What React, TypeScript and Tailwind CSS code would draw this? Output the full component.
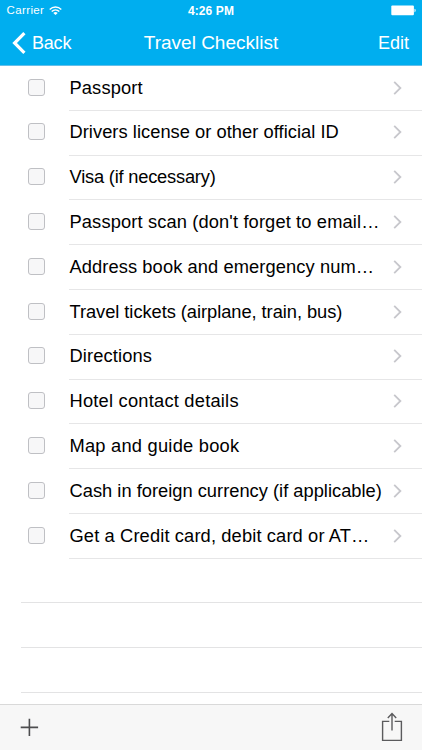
import { useState } from "react";
import clsx from "clsx";

type Item = {
  label: string;
  tracking: string;
};

const ITEMS: Item[] = [
  { label: "Passport", tracking: "tracking-[0.13px]" },
  { label: "Drivers license or other official ID", tracking: "tracking-[0.04px]" },
  { label: "Visa (if necessary)", tracking: "tracking-[-0.21px]" },
  { label: "Passport scan (don't forget to email…", tracking: "tracking-[0.13px]" },
  { label: "Address book and emergency num…", tracking: "tracking-[0.09px]" },
  { label: "Travel tickets (airplane, train, bus)", tracking: "tracking-[-0.05px]" },
  { label: "Directions", tracking: "tracking-[0.12px]" },
  { label: "Hotel contact details", tracking: "tracking-[0.22px]" },
  { label: "Map and guide book", tracking: "tracking-[0.23px]" },
  { label: "Cash in foreign currency (if applicable)", tracking: "tracking-[0.01px]" },
  { label: "Get a Credit card, debit card or AT…", tracking: "tracking-[0.13px]" },
];

function WifiIcon() {
  return (
    <svg width="13" height="10" viewBox="0 0 13 10" fill="none" stroke="white" strokeWidth="1.4">
      <path d="M0.7 3.5C4 0.2 9 0.2 12.3 3.5" />
      <path d="M2.7 5.5C4.9 3.4 8.1 3.4 10.3 5.5" />
      <path d="M6.5 9L4.3 6.9C5.6 5.8 7.4 5.8 8.7 6.9Z" fill="white" stroke="none" />
    </svg>
  );
}

function BatteryIcon() {
  return (
    <svg width="26" height="11" viewBox="0 0 26 11" fill="white">
      <rect x="0.3" y="0.5" width="22.6" height="9.8" rx="1" />
      <path d="M23.5 3.8C25 4 25 7 23.5 7.2Z" />
    </svg>
  );
}

function StatusBar() {
  return (
    <div className="grid h-[21px] grid-cols-3 items-center text-[11.5px] leading-none">
      <div className="flex items-center gap-[5px] pl-[6.5px] pt-[1px]">
        <span className="tracking-[0.38px]">Carrier</span>
        <WifiIcon />
      </div>
      <span className="pt-[1px] text-center text-[12px] font-bold tracking-[0.1px]">4:26 PM</span>
      <div className="flex justify-end pr-[5px]">
        <BatteryIcon />
      </div>
    </div>
  );
}

function ChecklistRow({ item }: { item: Item }) {
  const [checked, setChecked] = useState(false);

  return (
    <li className="flex h-[44.8px] pl-[28px]">
      <button
        type="button"
        role="checkbox"
        aria-checked={checked}
        aria-label={item.label}
        onClick={() => setChecked(!checked)}
        className={clsx(
          "mt-[12.6px] h-[17px] w-[17px] shrink-0 rounded-[3px] border border-[#bfc0c4]",
          checked ? "bg-[#00aeef]" : "bg-[#f7f7f8]",
        )}
      />
      <div className="ml-[24px] flex flex-1 justify-between border-b border-[#e6e6e7] pl-[0.5px] pr-[20px]">
        <span className={clsx("whitespace-nowrap pt-[10.6px] text-[18.3px] leading-[22px]", item.tracking)}>
          {item.label}
        </span>
        <svg className="mt-[14.6px] shrink-0" width="9" height="14" viewBox="0 0 9 14" fill="none">
          <path d="M1.2 0.8L7.4 7L1.2 13.2" stroke="#c7c7cc" strokeWidth="1.8" />
        </svg>
      </div>
    </li>
  );
}

export default function App() {
  return (
    <div className="flex h-[750px] w-[422px] flex-col overflow-hidden bg-white font-['Liberation_Sans',Arial,sans-serif] text-black">
      <header className="h-[66px] shrink-0 border-b border-[#63bfea] bg-[#00aeef] text-white">
        <StatusBar />
        <nav className="grid h-[44px] grid-cols-[1fr_auto_1fr] items-center text-[18px] leading-none">
          <button type="button" className="flex items-center gap-[6px] pl-[12px]">
            <svg width="14" height="22" viewBox="0 0 14 22" fill="none">
              <path d="M12.4 1.2L2.6 11L12.4 20.8" stroke="white" strokeWidth="3.2" />
            </svg>
            <span className="tracking-[-0.2px]">Back</span>
          </button>
          <h1 className="pb-[2px] text-[19px]">Travel Checklist</h1>
          <button type="button" className="pr-[13px] text-right">
            Edit
          </button>
        </nav>
      </header>

      <main className="min-h-0 flex-1 overflow-hidden">
        <ul>
          {ITEMS.map((item) => (
            <ChecklistRow key={item.label} item={item} />
          ))}
        </ul>
        {[0, 1, 2].map((n) => (
          <div key={n} className="ml-[21px] h-[44.6px] border-b border-[#e3e3e4]" />
        ))}
      </main>

      <footer className="flex h-[46px] shrink-0 justify-between border-t border-[#d9d9d9] bg-[#f7f7f7] pl-[20px] pr-[19px]">
        <button type="button" aria-label="Add">
          <svg width="19" height="19" viewBox="0 0 19 19" fill="none">
            <path d="M9.4 0.7V18.1M0.7 9.4H18.1" stroke="#4d4d4f" strokeWidth="1.6" />
          </svg>
        </button>
        <button type="button" aria-label="Share" className="pb-[2px]">
          <svg width="22" height="30" viewBox="0 0 22 30" fill="none" stroke="#5b5b5d" strokeWidth="1.4">
            <path d="M8.3 9.4H1.6V28.4H20.4V9.4H13.7" />
            <path d="M11 18.5V1.5M6.8 5.9L11 1.5L15.2 5.9" />
          </svg>
        </button>
      </footer>
    </div>
  );
}
